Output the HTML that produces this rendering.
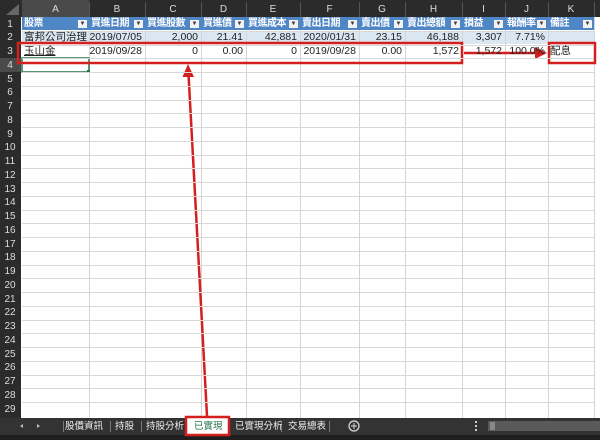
<!DOCTYPE html><html><head><meta charset="utf-8"><style>
body{margin:0;width:600px;height:440px;overflow:hidden;background:#fff;font-family:"Liberation Sans","Noto Sans CJK TC",sans-serif;position:relative}
.a{position:absolute}
.c{position:absolute;font-size:10.5px;line-height:13px;white-space:nowrap;color:#222}
</style></head><body>
<svg class="a" style="left:0;top:0" width="600" height="440">
<rect x="0" y="0" width="600" height="17" fill="#2b2b2b"/>
<rect x="0" y="0" width="21" height="418" fill="#2b2b2b"/>
<polygon points="6,15 19,15 19,4" fill="#666"/>
<rect x="22" y="0" width="67" height="17" fill="#4a4a4a"/>
<rect x="0" y="58" width="21" height="14" fill="#4a4a4a"/>
<rect x="22" y="17" width="572" height="13" fill="#4f86c6"/>
<rect x="22" y="31" width="572" height="13" fill="#dbe6f3"/>
<g stroke="#d4d4d4" stroke-width="1">
<line x1="89.5" y1="30" x2="89.5" y2="418"/><line x1="145.5" y1="30" x2="145.5" y2="418"/><line x1="201.5" y1="30" x2="201.5" y2="418"/><line x1="246.5" y1="30" x2="246.5" y2="418"/><line x1="300.5" y1="30" x2="300.5" y2="418"/><line x1="359.5" y1="30" x2="359.5" y2="418"/><line x1="405.5" y1="30" x2="405.5" y2="418"/><line x1="462.5" y1="30" x2="462.5" y2="418"/><line x1="505.5" y1="30" x2="505.5" y2="418"/><line x1="548.5" y1="30" x2="548.5" y2="418"/><line x1="594.5" y1="17" x2="594.5" y2="418"/>
</g>
<rect x="22" y="58" width="67" height="14" fill="none" stroke="#217346" stroke-width="1.5"/>
<rect x="87" y="70" width="3" height="3" fill="#217346"/>
<rect x="0" y="418" width="600" height="17" fill="#333"/>
<rect x="0" y="435" width="600" height="5" fill="#1f1f1f"/>
<rect x="186" y="418" width="43" height="16" fill="#fff"/>
<g stroke="#777"><line x1="63.5" y1="421" x2="63.5" y2="432"/><line x1="110.5" y1="421" x2="110.5" y2="432"/><line x1="141.5" y1="421" x2="141.5" y2="432"/><line x1="281.5" y1="421" x2="281.5" y2="432"/><line x1="329.5" y1="421" x2="329.5" y2="432"/></g>
<circle cx="354" cy="426" r="5" fill="none" stroke="#ddd" stroke-width="1.2"/><path d="M351 426h6M354 423v6" stroke="#ddd"/>
<polygon points="20,426 23,424 23,428" fill="#bbb"/><polygon points="37,424 37,428 40,426" fill="#bbb"/>
<rect x="488" y="421" width="112" height="10" fill="#5a5a5a"/><rect x="490" y="422" width="5" height="8" fill="#888"/>
<g fill="#ccc"><rect x="475" y="421" width="2" height="2"/><rect x="475" y="425" width="2" height="2"/><rect x="475" y="429" width="2" height="2"/></g>
<g stroke="#d3201f" stroke-width="2.5" fill="none">
<rect x="18" y="43" width="444" height="20"/>
<rect x="549" y="43" width="46" height="20"/>
<rect x="186" y="417" width="43" height="18"/>
<line x1="464" y1="53" x2="536" y2="53"/>
<line x1="207" y1="416" x2="188.5" y2="74"/>
</g>
<polygon points="547,53 535,47 535,59" fill="#d3201f"/>
<polygon points="188,64 182.5,77 194,77" fill="#d3201f"/>
</svg>
<div id="g"></div>
<script>
var cols=[[22,89,'A'],[89,145,'B'],[145,201,'C'],[201,246,'D'],[246,300,'E'],[300,359,'F'],[359,405,'G'],[405,462,'H'],[462,505,'I'],[505,548,'J'],[548,594,'K']],h='';
cols.forEach(function(c){h+='<div class="c" style="left:'+c[0]+'px;width:'+(c[1]-c[0])+'px;top:3px;text-align:center;color:#ddd;font-size:10px">'+c[2]+'</div>';h+='<div class="a" style="left:'+c[1]+'px;top:2px;width:1px;height:15px;background:#555"></div>'});
for(var r=1;r<=29;r++){var y=17+(r-1)*13.75;h+='<div class="c" style="left:0;width:20px;text-align:center;top:'+(y+0.5)+'px;color:#ddd;font-size:10px">'+r+'</div>';if(r>1)h+='<div class="a" style="left:22px;width:572px;height:1px;background:#d8d8d8;top:'+Math.round(y)+'px"></div>';}
var hd=['股票','買進日期','買進股數','買進價','買進成本','賣出日期','賣出價','賣出總額','損益','報酬率','備註'];
cols.forEach(function(c,i){h+='<div class="c" style="left:'+(c[0]+2)+'px;top:17px;color:#fff;font-weight:bold;font-size:10px;letter-spacing:-0.5px">'+hd[i]+'</div><div class="a" style="left:'+(c[1]-11)+'px;top:20px;width:9px;height:8px;background:#f2f2f2;font-size:6px;line-height:8px;text-align:center;color:#333">▼</div>'});
function row(y,v){v.forEach(function(t,i){if(t==='')return;var c=cols[i];h+='<div class="c" style="'+(i==0||i==10?'left:'+(c[0]+2)+'px':'right:'+(600-c[1]+3)+'px')+';top:'+y+'px">'+t+'</div>'})}
row(31,['富邦公司治理','2019/07/05','2,000','21.41','42,881','2020/01/31','23.15','46,188','3,307','7.71%','']);
row(45,['<u>玉山金</u>','2019/09/28','0','0.00','0','2019/09/28','0.00','1,572','1,572','100.0%','配息']);
var t=[[65,'股價資訊'],[115,'持股'],[146,'持股分析'],[194,'已實現'],[235,'已實現分析'],[288,'交易總表']];
t.forEach(function(x,i){h+='<div class="c" style="left:'+x[0]+'px;top:420px;font-size:9.5px;color:'+(i==3?'#217346':'#eee')+'">'+x[1]+'</div>'});
document.getElementById('g').innerHTML=h;
</script>
</body></html>
